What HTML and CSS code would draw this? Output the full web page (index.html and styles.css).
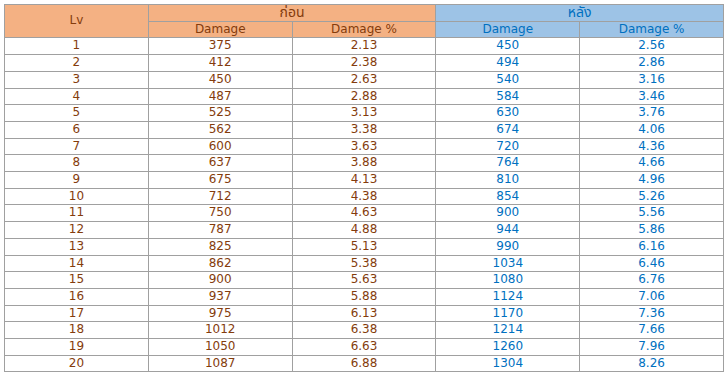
FILE: index.html
```html
<!DOCTYPE html>
<html lang="th">

<head>
  <meta charset="UTF-8">
  <title>Damage Lv</title>
  <link rel="stylesheet" href="styles.css">
</head>

<body>
  <table class="dmg-table">
    <colgroup>
      <col><col><col><col><col>
    </colgroup>
    <thead>
      <tr>
        <th class="before" rowspan="2">Lv</th>
        <th class="before thai" colspan="2">ก่อน</th>
        <th class="after thai" colspan="2">หลัง</th>
      </tr>
      <tr>
        <th class="before">Damage</th>
        <th class="before">Damage %</th>
        <th class="after">Damage</th>
        <th class="after">Damage %</th>
      </tr>
    </thead>
    <tbody id="rows"></tbody>
  </table>

  <script>
    const rows = [
      [1, 375, '2.13', 450, '2.56'],
      [2, 412, '2.38', 494, '2.86'],
      [3, 450, '2.63', 540, '3.16'],
      [4, 487, '2.88', 584, '3.46'],
      [5, 525, '3.13', 630, '3.76'],
      [6, 562, '3.38', 674, '4.06'],
      [7, 600, '3.63', 720, '4.36'],
      [8, 637, '3.88', 764, '4.66'],
      [9, 675, '4.13', 810, '4.96'],
      [10, 712, '4.38', 854, '5.26'],
      [11, 750, '4.63', 900, '5.56'],
      [12, 787, '4.88', 944, '5.86'],
      [13, 825, '5.13', 990, '6.16'],
      [14, 862, '5.38', 1034, '6.46'],
      [15, 900, '5.63', 1080, '6.76'],
      [16, 937, '5.88', 1124, '7.06'],
      [17, 975, '6.13', 1170, '7.36'],
      [18, 1012, '6.38', 1214, '7.66'],
      [19, 1050, '6.63', 1260, '7.96'],
      [20, 1087, '6.88', 1304, '8.26']
    ];

    const body = document.getElementById('rows');
    rows.forEach(function (r) {
      const tr = document.createElement('tr');
      r.forEach(function (v, i) {
        const td = document.createElement('td');
        td.className = i < 3 ? 'before' : 'after';
        td.textContent = v;
        tr.appendChild(td);
      });
      body.appendChild(tr);
    });
  </script>
</body>

</html>
```

FILE: styles.css
```css
* {
  box-sizing: border-box;
}

body {
  margin: 4px;
  background: #FFFFFF;
  font-family: "DejaVu Sans", "Noto Sans", "Noto Sans Thai", sans-serif;
  font-size: 12px;
}

.dmg-table {
  width: 720px;
  border-collapse: collapse;
  table-layout: fixed;
}

.dmg-table th,
.dmg-table td {
  border: 1px solid #A0A0A0;
  padding: 0;
  height: 16.7px;
  line-height: 15.7px;
  text-align: center;
  font-weight: normal;
}

.dmg-table th.thai {
  font-size: 14px;
}

.dmg-table th.before {
  background: #F4B183;
}

.dmg-table th.after {
  background: #9DC3E6;
}

.before {
  color: #843C0C;
}

.after {
  color: #0070C0;
}
```
